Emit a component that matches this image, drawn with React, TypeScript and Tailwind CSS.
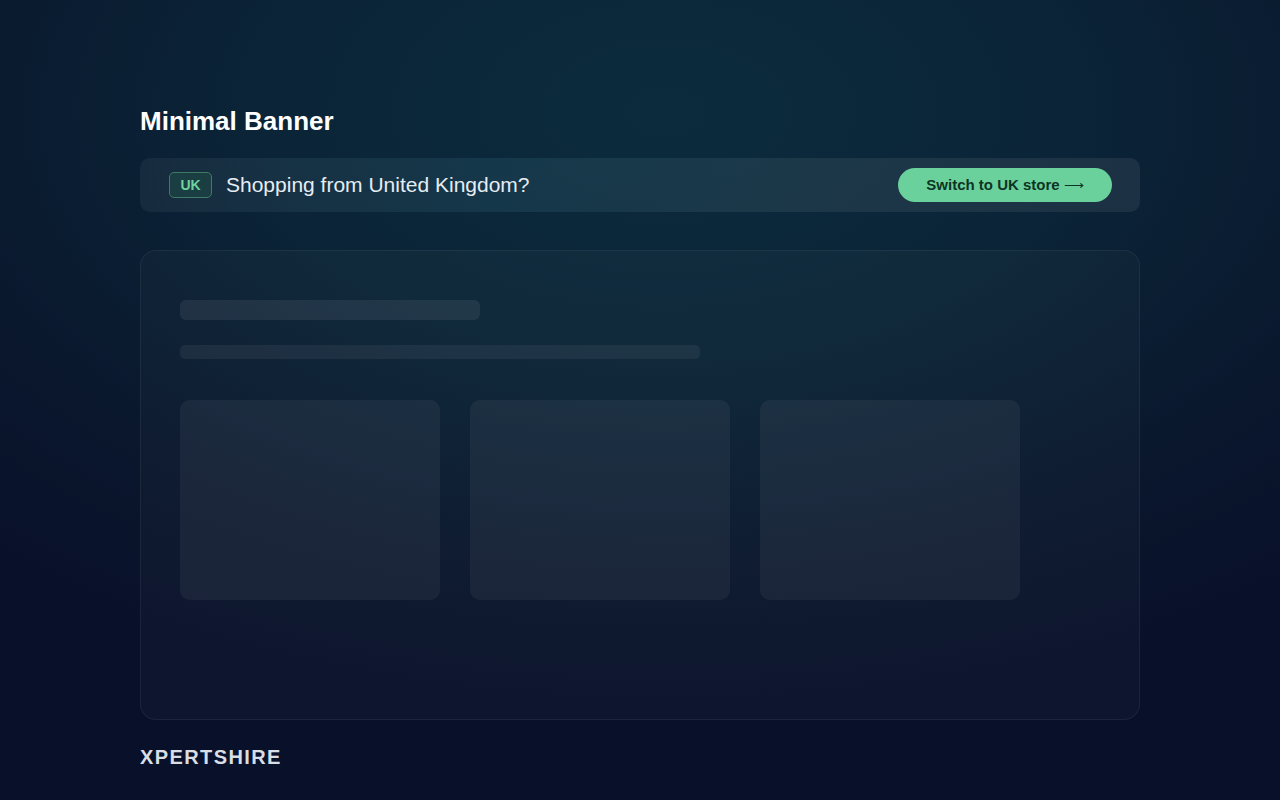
export default function App() {
  return (
    <div
      className="min-h-screen w-full bg-[#0a1228] bg-[radial-gradient(ellipse_80%_75%_at_52%_14%,#0b2c3d_0%,#0b2437_40%,#0a172d_75%,#09112a_100%)] font-['Liberation_Sans',Arial,sans-serif]"
    >
      <div className="mx-auto flex w-[1000px] flex-col pt-[104px]">
        <h1 className="text-[26px] font-bold leading-[34px] text-white">Minimal Banner</h1>

        {/* banner */}
        <div className="mt-[20px] flex h-[54px] items-center justify-between rounded-[10px] bg-[linear-gradient(90deg,rgba(255,255,255,0.05)_0%,rgba(80,150,170,0.14)_35%,rgba(255,255,255,0.07)_70%,rgba(255,255,255,0.07)_100%)] pl-[29px] pr-[28px]">
          <div className="flex items-center gap-[14px]">
            <span className="flex h-[26px] w-[43px] items-center justify-center rounded-[5px] border border-[#3f7a66] bg-[#1d4a44]/60 text-[14px] font-bold text-[#6dd39e]">
              UK
            </span>
            <span className="text-[21px] text-[#e6edf3]">Shopping from United Kingdom?</span>
          </div>
          <button className="flex h-[34px] w-[214px] items-center justify-center gap-[4px] rounded-full bg-[#6bd19c] text-[15px] font-bold text-[#0d3524]">
            Switch to UK store
            <span className="text-[14px] font-normal">&#x27F6;</span>
          </button>
        </div>

        {/* placeholder page */}
        <div className="mt-[38px] h-[470px] rounded-[16px] border border-white/[0.06] bg-white/[0.025] p-[39px] pt-[49px]">
          <div className="h-[20px] w-[300px] rounded-[6px] bg-white/[0.07]" />
          <div className="mt-[25px] h-[14px] w-[520px] rounded-[5px] bg-white/[0.06]" />
          <div className="mt-[41px] flex gap-[30px]">
            <div className="h-[200px] w-[260px] rounded-[10px] bg-white/[0.05]" />
            <div className="h-[200px] w-[260px] rounded-[10px] bg-white/[0.05]" />
            <div className="h-[200px] w-[260px] rounded-[10px] bg-white/[0.05]" />
          </div>
        </div>

        <div className="mt-[22px] text-[20px] font-bold tracking-[0.07em] text-[#d9dde4]">XPERTSHIRE</div>
      </div>
    </div>
  );
}
